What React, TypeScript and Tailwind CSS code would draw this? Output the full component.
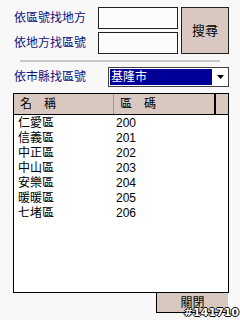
import React from "react";

const rows = [
  ["仁愛區", "200"],
  ["信義區", "201"],
  ["中正區", "202"],
  ["中山區", "203"],
  ["安樂區", "204"],
  ["暖暖區", "205"],
  ["七堵區", "206"],
];

export default function App() {
  const font = { fontFamily: '"Liberation Sans", "Noto Sans CJK TC", sans-serif' };
  return (
    <div className="relative w-[240px] h-[320px] bg-[#f8f8f8] overflow-hidden text-[12px]" style={font}>
      <div className="flex pt-[7px] pl-[14px]">
        <div className="flex flex-col gap-[3px] w-[84px] text-[#101080]">
          <div className="h-[22px] leading-[22px]">依區號找地方</div>
          <div className="h-[22px] leading-[22px]">依地方找區號</div>
        </div>
        <div className="flex flex-col gap-[3px]">
          <div className="w-[80px] h-[22px] border border-[#202020] bg-[#fcfcfc]" />
          <div className="w-[80px] h-[22px] border border-[#202020] bg-[#fcfcfc]" />
        </div>
        <div className="ml-[3px] w-[48px] h-[47px] border border-[#202020] bg-[#d8c8c0] flex items-center justify-center text-black text-[13px]">
          搜尋
        </div>
      </div>
      <div className="mt-[6px] ml-[20px] w-[200px] h-[2px] bg-[#c8c8c8]" />
      <div className="flex items-center mt-[5px] pl-[14px]">
        <div className="w-[94px] text-[#101080] leading-[20px]">依市縣找區號</div>
        <div className="w-[121px] h-[20px] border border-[#404040] bg-white flex">
          <div className="flex-1 m-[1px] bg-[#000098] text-white leading-[16px] pl-[1px]">基隆市</div>
          <div className="w-[15px] flex items-center justify-center">
            <svg width="7" height="4" viewBox="0 0 7 4">
              <polygon points="0,0 7,0 3.5,4" fill="#000" />
            </svg>
          </div>
        </div>
      </div>
      <div className="mt-[6px] ml-[13px] w-[216px] h-[200px] border border-black bg-white flex flex-col">
        <div className="h-[21px] bg-[#d8c8c0] border-b border-black flex text-black leading-[20px]">
          <div className="w-[100px] pl-[6px] border-r border-[#a09890]">名　稱</div>
          <div className="w-[100px] pl-[6px]">區　碼</div>
          <div className="w-[2px] bg-black" />
          <div className="flex-1" />
        </div>
        <div className="flex flex-col pt-[1px]">
          {rows.map(([n, c]) => (
            <div key={c} className="flex h-[15px] leading-[15px] text-black">
              <div className="w-[102px] pl-[4px]">{n}</div>
              <div>{c}</div>
            </div>
          ))}
        </div>
      </div>
      <div className="flex justify-end pr-[12px]">
        <div className="w-[72px] h-[20px] bg-[#d8c8c0] border-l border-b border-black flex items-center justify-center text-black text-[12px]">
          關閉
        </div>
      </div>
      <div
        className="absolute right-[1px] bottom-[2px] text-[11px] font-bold text-white leading-none [text-shadow:1px_0_0_#000,-1px_0_0_#000,0_1px_0_#000,0_-1px_0_#000]"
        style={{ fontFamily: '"DejaVu Sans", sans-serif' }}
      >
        #141710
      </div>
    </div>
  );
}
